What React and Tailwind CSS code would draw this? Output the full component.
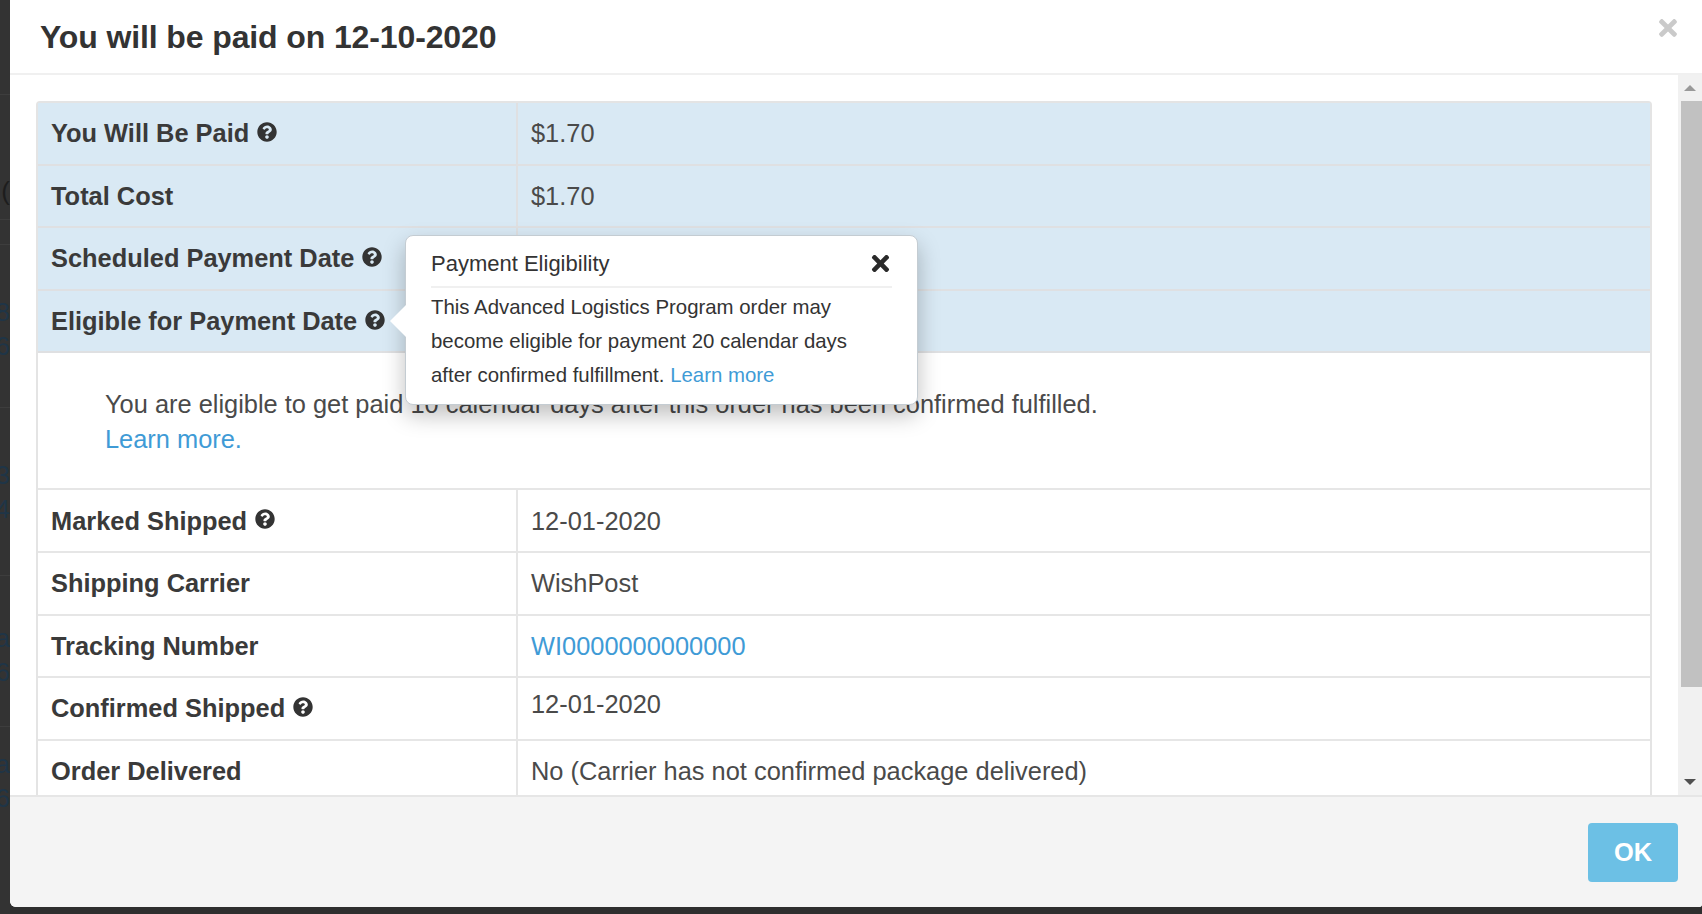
import { FaQuestionCircle, FaTimes } from "react-icons/fa";

// what shows of the page behind the dialog
const behind = [
  { h: 95, line: true },
  { h: 80, text: "" },
  { h: 32, text: "(", color: "text-[#1d1d1d]" },
  { h: 13, line: true },
  { h: 25, line: true },
  { h: 50, text: "" },
  { h: 34, text: "38" },
  { h: 34, text: "6" },
  { h: 45, line: true },
  { h: 50, text: "" },
  { h: 34, text: "3" },
  { h: 34, text: "4" },
  { h: 50, line: true },
  { h: 45, text: "" },
  { h: 34, text: "a" },
  { h: 34, text: "6" },
  { h: 38, line: true },
  { h: 20, text: "" },
  { h: 34, text: "a" },
  { h: 34, text: "6" },
];

const HelpIcon = () => <FaQuestionCircle size={20} className="inline-block ml-[8px] mb-[3px] text-[#333]" />;

const Row = ({ label, help, value, blue, link, valueClass = "" }) => (
  <div className={`flex h-[62.6px] border-b-[2px] ${blue ? "bg-[#d9e9f4] border-[#dfe0e2]" : "bg-white border-[#e6e6e6]"}`}>
    <div className={`w-[480px] shrink-0 flex items-center pl-[13px] border-r-[2px] font-bold text-[#3a3a3a] ${blue ? "border-[#dfe0e2]" : "border-[#e6e6e6]"}`}>
      {label}
      {help && <HelpIcon />}
    </div>
    <div className={`pl-[13px] flex items-center ${link ? "text-[#3f9bd6]" : "text-[#4a4a4a]"} ${valueClass}`}>{value}</div>
  </div>
);

export default function App() {
  return (
    <div className="w-[1702px] h-[914px] overflow-hidden bg-[#2e2e2e] flex font-['Liberation_Sans',sans-serif]">
      <div className="w-[10px] h-full shrink-0 overflow-hidden bg-[#333] flex flex-col">
        {behind.map((b, i) => (
          <div
            key={i}
            style={{ height: b.h }}
            className={`shrink-0 flex items-center justify-end text-[26px] leading-none ${b.color || "text-[#1f3547]"} ${b.line ? "border-b border-[#3d3d3d]" : ""}`}
          >
            {b.text}
          </div>
        ))}
      </div>

      <div className="relative flex-1 mb-[7px] bg-white rounded-bl-[6px] rounded-br-[3px] flex flex-col overflow-hidden">
        <div className="h-[75px] shrink-0 flex items-center justify-between pl-[30px] pr-[21px] border-b-[2px] border-[#f0f0f0]">
          <h1 className="text-[32px] font-bold text-[#333] tracking-[-0.12px]">You will be paid on 12-10-2020</h1>
          <FaTimes size={26} className="text-[#cacaca] mb-[17px]" />
        </div>

        <div className="flex-1 flex min-h-0">
          <div className="flex-1 overflow-hidden px-[26px] pt-[26px] text-[25.4px]">
            <div className="border-x-[2px] border-t-[2px] border-[#e4e4e4] rounded-t-[4px]">
              <Row blue label="You Will Be Paid" help value="$1.70" />
              <Row blue label="Total Cost" value="$1.70" />
              <Row blue label="Scheduled Payment Date" help value="12-10-2020" />
              <Row blue label="Eligible for Payment Date" help value="12-10-2020" />
              <div className="h-[137px] border-b-[2px] border-[#e6e6e6] pl-[67px] pt-[34px] text-[#4a4a4a] leading-[34.4px]">
                You are eligible to get paid 10 calendar days after this order has been confirmed fulfilled.
                <br />
                <span className="text-[#3f9bd6]">Learn more.</span>
              </div>
              <Row label="Marked Shipped" help value="12-01-2020" />
              <Row label="Shipping Carrier" value="WishPost" />
              <Row link label="Tracking Number" value="WI0000000000000" />
              <Row label="Confirmed Shipped" help value="12-01-2020" valueClass="pb-[8px]" />
              <Row label="Order Delivered" value="No (Carrier has not confirmed package delivered)" />
            </div>
          </div>

          <div className="w-[24px] shrink-0 bg-[#f1f1f1] flex flex-col items-end">
            <div className="h-[26px] w-full flex items-center justify-center">
              <div className="w-0 h-0 border-x-[6px] border-x-transparent border-b-[6px] border-b-[#999]" />
            </div>
            <div className="w-[21px] h-[586px] bg-[#c1c1c1]" />
            <div className="flex-1 w-full flex items-end justify-center pb-[10px]">
              <div className="w-0 h-0 border-x-[6px] border-x-transparent border-t-[6px] border-t-[#505050]" />
            </div>
          </div>
        </div>

        <div className="h-[112px] shrink-0 bg-[#f4f4f4] border-t-[2px] border-[#e6e6e6] flex items-center justify-end pr-[24px]">
          <button className="w-[90px] h-[59px] rounded-[4px] bg-[#6cc0e5] text-white font-bold text-[25.4px]">OK</button>
        </div>

        <div className="absolute left-[395px] top-[235px] w-[513px] h-[170px] bg-white rounded-[8px] border border-[#c4ccd2] shadow-[0_10px_22px_rgba(0,0,0,0.25)] px-[25px] pt-[10px] text-[#333] text-[20.4px]">
          <div className="absolute -left-[16px] top-[69px] w-0 h-0 border-y-[16px] border-y-transparent border-r-[16px] border-r-white" />
          <div className="flex items-center justify-between h-[42px] border-b-[2px] border-[#f0f0f0] pb-[6px]">
            <span className="text-[22px]">Payment Eligibility</span>
            <FaTimes size={25} className="text-[#2a2a2a] mr-[-1px]" />
          </div>
          <p className="leading-[33.8px] mt-[3px] whitespace-nowrap">
            This Advanced Logistics Program order may
            <br />
            become eligible for payment 20 calendar days
            <br />
            after confirmed fulfillment. <span className="text-[#3f9bd6]">Learn more</span>
          </p>
        </div>
      </div>
    </div>
  );
}
